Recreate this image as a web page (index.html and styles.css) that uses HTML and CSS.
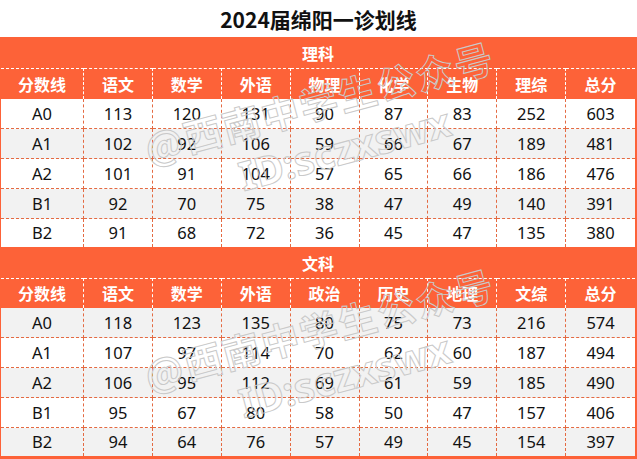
FILE: index.html
```html
<!DOCTYPE html>
<html lang="zh-CN">
<head>
<meta charset="utf-8">
<title>2024届绵阳一诊划线</title>
<link rel="stylesheet" href="styles.css">
</head>
<body>
<div class="page">
  <h1 class="title">2024届绵阳一诊划线</h1>
  <div class="board">
    <table class="grid">
      <colgroup><col class="c-first"><col><col><col><col><col><col><col><col></colgroup>
      <tbody>
        <tr class="band"><th colspan="9">理科</th></tr>
        <tr class="head"><th>分数线</th><th>语文</th><th>数学</th><th>外语</th><th>物理</th><th>化学</th><th>生物</th><th>理综</th><th>总分</th></tr>
        <tr class="row"><td>A0</td><td>113</td><td>120</td><td>131</td><td>90</td><td>87</td><td>83</td><td>252</td><td>603</td></tr>
        <tr class="row alt"><td>A1</td><td>102</td><td>92</td><td>106</td><td>59</td><td>66</td><td>67</td><td>189</td><td>481</td></tr>
        <tr class="row"><td>A2</td><td>101</td><td>91</td><td>104</td><td>57</td><td>65</td><td>66</td><td>186</td><td>476</td></tr>
        <tr class="row alt"><td>B1</td><td>92</td><td>70</td><td>75</td><td>38</td><td>47</td><td>49</td><td>140</td><td>391</td></tr>
        <tr class="row last"><td>B2</td><td>91</td><td>68</td><td>72</td><td>36</td><td>45</td><td>47</td><td>135</td><td>380</td></tr>
        <tr class="band"><th colspan="9">文科</th></tr>
        <tr class="head head2"><th>分数线</th><th>语文</th><th>数学</th><th>外语</th><th>政治</th><th>历史</th><th>地理</th><th>文综</th><th>总分</th></tr>
        <tr class="row alt"><td>A0</td><td>118</td><td>123</td><td>135</td><td>80</td><td>75</td><td>73</td><td>216</td><td>574</td></tr>
        <tr class="row"><td>A1</td><td>107</td><td>97</td><td>114</td><td>70</td><td>62</td><td>60</td><td>187</td><td>494</td></tr>
        <tr class="row alt"><td>A2</td><td>106</td><td>95</td><td>112</td><td>69</td><td>61</td><td>59</td><td>185</td><td>490</td></tr>
        <tr class="row"><td>B1</td><td>95</td><td>67</td><td>80</td><td>58</td><td>50</td><td>47</td><td>157</td><td>406</td></tr>
        <tr class="row alt last"><td>B2</td><td>94</td><td>64</td><td>76</td><td>57</td><td>49</td><td>45</td><td>154</td><td>397</td></tr>
      </tbody>
    </table>
    <div class="watermark wm-top">
      <div class="wm-line">@西南中学生公众号</div>
      <div class="wm-line wm-id">ID:sczxswx</div>
    </div>
    <div class="watermark wm-bottom">
      <div class="wm-line">@西南中学生公众号</div>
      <div class="wm-line wm-id">ID:sczxswx</div>
    </div>
  </div>
</div>
</body>
</html>
```

FILE: styles.css
```css
* { box-sizing: border-box; }

html, body {
  margin: 0;
  padding: 0;
  background: #ffffff;
}

body {
  font-family: "Noto Sans", "Noto Sans CJK SC", sans-serif;
  color: #111111;
  width: 637px;
  height: 459px;
  overflow: hidden;
}

.page {
  position: relative;
  width: 637px;
}

.title {
  margin: 0;
  height: 37px;
  display: flex;
  align-items: center;
  justify-content: center;
  font-family: "Noto Sans CJK SC", sans-serif;
  font-weight: 700;
  font-size: 21px;
  color: #111111;
  letter-spacing: 0;
}

.board {
  position: relative;
  background: #fd6238;
  padding: 0 2px 3px 1px;
}

.grid {
  width: 100%;
  table-layout: fixed;
  border-collapse: separate;
  border-spacing: 0;
}

.c-first { width: 83px; }

.grid th,
.grid td {
  padding: 0;
  text-align: center;
  vertical-align: middle;
  line-height: 20px;
}

.band th {
  height: 31px;
  color: #ffffff;
  font-family: "Noto Sans CJK SC", sans-serif;
  font-weight: 700;
  font-size: 16px;
  background: #fd6238;
}

.head th {
  height: 31px;
  color: #ffffff;
  font-family: "Noto Sans CJK SC", sans-serif;
  font-weight: 700;
  font-size: 16px;
  background: #fd6238;
  border-top: 1px dashed #ffffff;
  border-right: 1px dashed #ffffff;
  padding-bottom: 1px;
}

.head2 th { height: 30px; }

.head th:last-child { border-right: 0; }

.row td {
  height: 30px;
  background: #ffffff;
  font-size: 16.5px;
  color: #111111;
  border-bottom: 1px dashed #e46a42;
  border-right: 1px dashed #e46a42;
}

.row.alt td { background: #f2f2f2; }

.row td:last-child { border-right: 0; }

.row.last td {
  height: 28px;
  border-bottom: 0;
}

.watermark {
  position: absolute;
  left: 140px;
  transform-origin: 0 0;
  transform: rotate(-15deg);
  pointer-events: none;
  white-space: nowrap;
}

.wm-top { top: 92px; }
.wm-bottom { top: 319px; }

.wm-line {
  font-family: "Noto Sans CJK SC", sans-serif;
  font-weight: 700;
  font-size: 38px;
  line-height: 40px;
  letter-spacing: 2px;
  color: transparent;
  -webkit-text-stroke: 1px #c9c9c9;
}

.wm-id {
  font-family: "Noto Sans", sans-serif;
  font-size: 40px;
  letter-spacing: 0;
  margin-left: 84px;
  margin-top: 12px;
}
```
